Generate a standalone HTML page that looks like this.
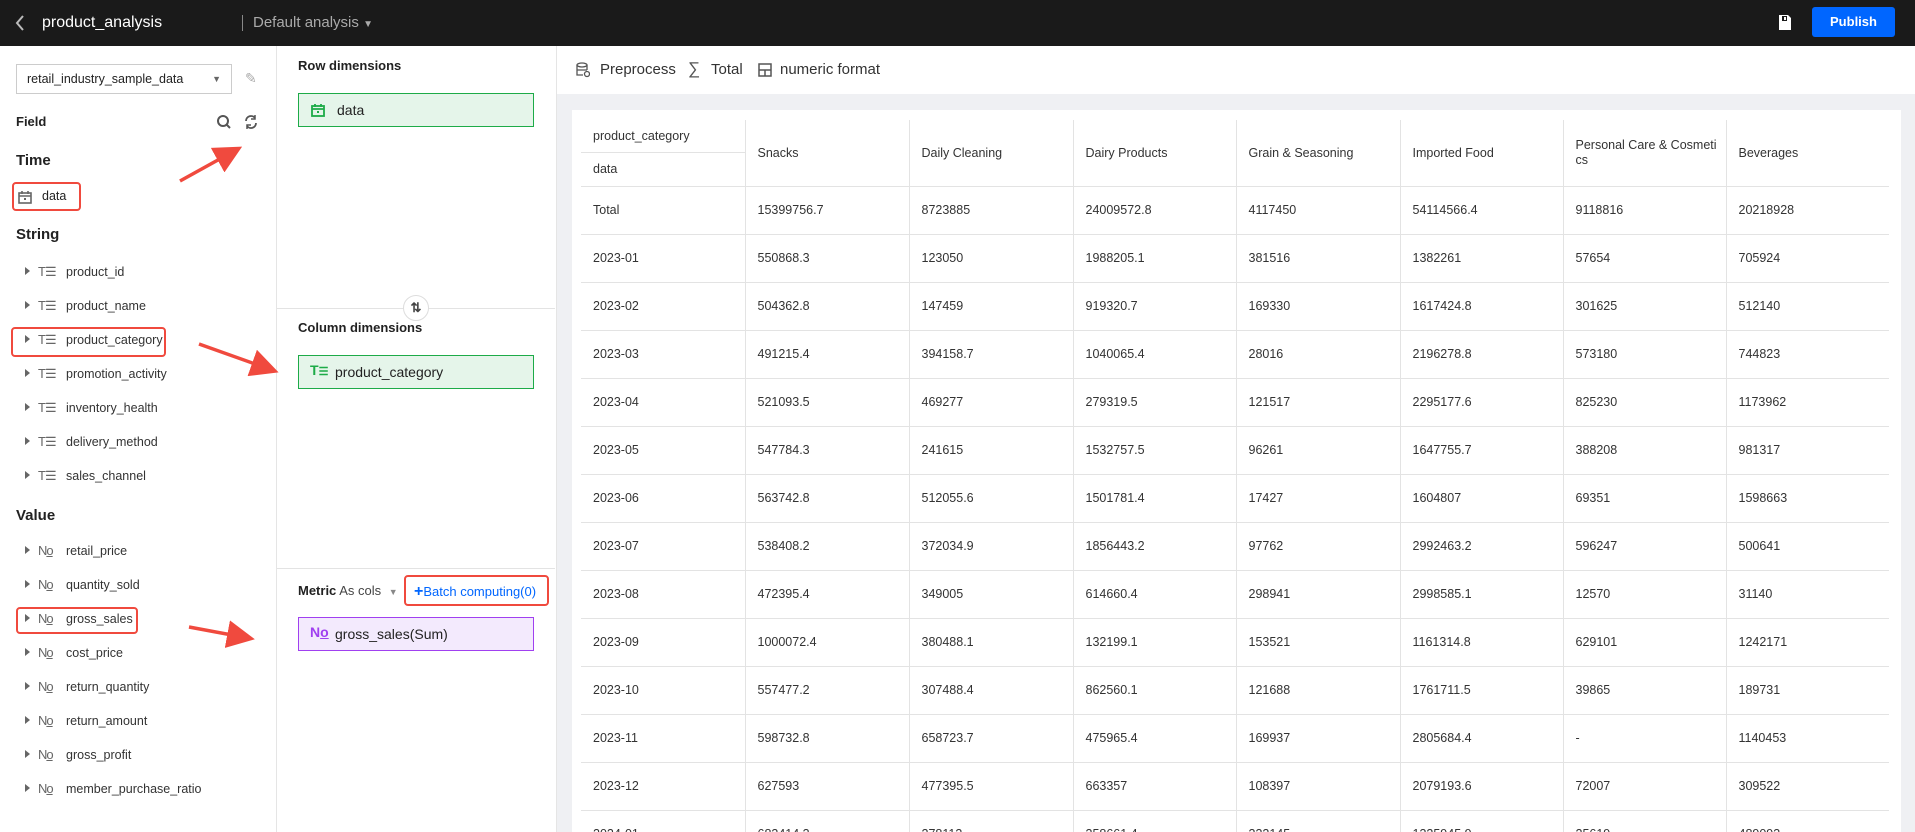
<!DOCTYPE html>
<html style="width:1915px;height:832px;overflow:hidden"><head><meta charset="utf-8"><style>
*{box-sizing:border-box;margin:0;padding:0}
body{width:1915px;height:832px;overflow:hidden;font-family:"Liberation Sans",sans-serif;color:#222;background:#fff;position:relative}
.a{position:absolute;white-space:nowrap}
.hdr{position:absolute;left:0;top:0;width:1915px;height:46px;background:#1a1a1a}
.fld{position:absolute;left:25px;font-size:12.5px;color:#333;height:20px;line-height:20px}
.fld .tri{display:inline-block;width:0;height:0;border-left:5px solid #666;border-top:4px solid transparent;border-bottom:4px solid transparent;margin-right:8px;vertical-align:1px}
.fld .ic{display:inline-block;width:20px;color:#666;font-size:13px;letter-spacing:-1px;margin-right:8px}
.sec{position:absolute;left:16px;font-size:15px;font-weight:bold;color:#222}
.red{position:absolute;border:2.5px solid #f04a3e;border-radius:4px}
table{border-collapse:collapse;font-size:12.5px;color:#333;table-layout:fixed;width:1308px}
td{border:1px solid #e3e3e3;height:48px;padding:0 12px;vertical-align:middle;overflow:hidden}
tr td:first-child{border-left:none}
tr td:last-child{border-right:none}
tr:first-child td{border-top:none}
</style></head><body>
<div class="hdr"></div>
<svg class="a" style="left:14px;top:14px" width="12" height="18"><path d="M9 2L3 9l6 7" stroke="#bbb" stroke-width="2" fill="none"/></svg>
<div class="a" style="left:42px;top:14px;font-size:16px;color:#fff">product_analysis</div>
<div class="a" style="left:242px;top:15px;width:1px;height:16px;background:#888"></div>
<div class="a" style="left:253px;top:14px;font-size:15px;color:#aaa">Default analysis <span style="font-size:10px">▼</span></div>
<svg class="a" style="left:1777px;top:14px" width="16" height="17"><path d="M2 1h9l3 3v12H2z" fill="#fff"/><rect x="5" y="2" width="5" height="5" fill="#1a1a1a"/><rect x="7" y="3" width="2" height="3" fill="#fff"/></svg>
<div class="a" style="left:1812px;top:7px;width:83px;height:30px;background:#0066ff;border-radius:3px;color:#fff;font-size:13px;font-weight:bold;text-align:center;line-height:30px">Publish</div>

<div class="a" style="left:276px;top:46px;width:1px;height:786px;background:#e5e5e5"></div>
<div class="a" style="left:16px;top:64px;width:216px;height:30px;border:1px solid #ccc;font-size:12.5px;line-height:28px;padding-left:10px">retail_industry_sample_data<span style="position:absolute;right:10px;font-size:9px;color:#666">▼</span></div>
<div class="a" style="left:245px;top:70px;color:#aaa;font-size:14px">✎</div>
<div class="a" style="left:16px;top:114px;font-size:13px;font-weight:bold">Field</div>
<svg class="a" style="left:216px;top:114px" width="16" height="16"><circle cx="7" cy="7" r="5" stroke="#555" stroke-width="2" fill="none"/><path d="M11 11l3 3" stroke="#555" stroke-width="2"/></svg>
<svg class="a" style="left:243px;top:114px" width="16" height="16"><path d="M3 7a5 5 0 0 1 9-3M13 9a5 5 0 0 1-9 3" stroke="#555" stroke-width="1.8" fill="none"/><path d="M12 1v4h-4M4 15v-4h4" stroke="#555" stroke-width="1.5" fill="none"/></svg>
<div class="sec" style="top:152px">Time</div>
<svg class="a" style="left:18px;top:190px" width="14" height="14"><rect x="1" y="3" width="12" height="10" fill="none" stroke="#666" stroke-width="1.6"/><path d="M1 6h12M4 1v3M10 1v3" stroke="#666" stroke-width="1.6"/><rect x="6" y="8" width="2" height="2" fill="#666"/></svg>
<div class="a" style="left:42px;top:189px;font-size:12.5px">data</div>
<div class="red" style="left:12px;top:182px;width:69px;height:29px"></div>
<div class="sec" style="top:226px">String</div>
<div class="fld" style="top:262px"><span class="tri"></span><span class="ic">T☰</span>product_id</div>
<div class="fld" style="top:296px"><span class="tri"></span><span class="ic">T☰</span>product_name</div>
<div class="fld" style="top:330px"><span class="tri"></span><span class="ic">T☰</span>product_category</div>
<div class="fld" style="top:364px"><span class="tri"></span><span class="ic">T☰</span>promotion_activity</div>
<div class="fld" style="top:398px"><span class="tri"></span><span class="ic">T☰</span>inventory_health</div>
<div class="fld" style="top:432px"><span class="tri"></span><span class="ic">T☰</span>delivery_method</div>
<div class="fld" style="top:466px"><span class="tri"></span><span class="ic">T☰</span>sales_channel</div>
<div class="red" style="left:11px;top:327px;width:155px;height:30px"></div>
<div class="sec" style="top:507px">Value</div>
<div class="fld" style="top:541px"><span class="tri"></span><span class="ic">N<u>o</u></span>retail_price</div>
<div class="fld" style="top:575px"><span class="tri"></span><span class="ic">N<u>o</u></span>quantity_sold</div>
<div class="fld" style="top:609px"><span class="tri"></span><span class="ic">N<u>o</u></span>gross_sales</div>
<div class="fld" style="top:643px"><span class="tri"></span><span class="ic">N<u>o</u></span>cost_price</div>
<div class="fld" style="top:677px"><span class="tri"></span><span class="ic">N<u>o</u></span>return_quantity</div>
<div class="fld" style="top:711px"><span class="tri"></span><span class="ic">N<u>o</u></span>return_amount</div>
<div class="fld" style="top:745px"><span class="tri"></span><span class="ic">N<u>o</u></span>gross_profit</div>
<div class="fld" style="top:779px"><span class="tri"></span><span class="ic">N<u>o</u></span>member_purchase_ratio</div>
<div class="red" style="left:16px;top:607px;width:122px;height:27px"></div>

<svg class="a" style="left:0;top:0" width="556" height="832">
<defs><marker id="m" markerWidth="8" markerHeight="8" refX="6" refY="4" orient="auto"><path d="M0 0L8 4L0 8z" fill="#f04a3e"/></marker></defs>
<path d="M180 181L236 150" stroke="#f04a3e" stroke-width="3.5" marker-end="url(#m)"/>
<path d="M199 344L272 370" stroke="#f04a3e" stroke-width="3.5" marker-end="url(#m)"/>
<path d="M189 627L248 638" stroke="#f04a3e" stroke-width="3.5" marker-end="url(#m)"/>
</svg>

<div class="a" style="left:556px;top:46px;width:1px;height:786px;background:#e5e5e5"></div>
<div class="a" style="left:298px;top:58px;font-size:13px;font-weight:bold">Row dimensions</div>
<div class="a" style="left:298px;top:93px;width:236px;height:34px;border:1px solid #1dab48;background:#e5f5ea;font-size:14px;line-height:32px;padding-left:38px">data</div>
<svg class="a" style="left:311px;top:103px" width="14" height="14"><rect x="1" y="3" width="12" height="10" fill="none" stroke="#1dab48" stroke-width="1.8"/><path d="M1 6h12M4 1v3M10 1v3" stroke="#1dab48" stroke-width="1.8"/><rect x="6" y="8" width="2" height="2" fill="#1dab48"/></svg>
<div class="a" style="left:277px;top:308px;width:278px;height:1px;background:#e3e3e3"></div>
<div class="a" style="left:403px;top:295px;width:26px;height:26px;border:1px solid #ddd;border-radius:50%;background:#fff;text-align:center;line-height:24px;font-size:13px;font-weight:bold;color:#444">⇅</div>
<div class="a" style="left:298px;top:320px;font-size:13px;font-weight:bold">Column dimensions</div>
<div class="a" style="left:298px;top:355px;width:236px;height:34px;border:1px solid #1dab48;background:#e5f5ea;font-size:14px;line-height:32px;padding-left:36px">product_category</div>
<div class="a" style="left:310px;top:362px;font-size:14px;color:#1dab48;font-weight:bold">T<span style="font-size:11px">☰</span></div>
<div class="a" style="left:277px;top:568px;width:278px;height:1px;background:#e3e3e3"></div>
<div class="a" style="left:298px;top:583px;font-size:13px"><b>Metric</b> <span style="color:#444">As cols</span> <span style="font-size:9px;color:#888;margin-left:4px">▼</span></div>
<div class="a" style="left:414px;top:583px;font-size:13px;color:#0066ff"><b style="font-size:16px">+</b>Batch computing(0)</div>
<div class="red" style="left:404px;top:575px;width:145px;height:31px"></div>
<div class="a" style="left:298px;top:617px;width:236px;height:34px;border:1px solid #a040f0;background:#f3eafd;font-size:14px;line-height:32px;padding-left:36px">gross_sales(Sum)</div>
<div class="a" style="left:310px;top:624px;font-size:14px;color:#a040f0;font-weight:bold">N<u>o</u></div>

<svg class="a" style="left:576px;top:62px" width="14" height="16"><ellipse cx="6" cy="3" rx="5" ry="2" fill="none" stroke="#555" stroke-width="1.3"/><path d="M1 3v10h6M11 3v5M1 8h10" stroke="#555" stroke-width="1.3" fill="none"/><circle cx="11" cy="12" r="2.5" fill="none" stroke="#555" stroke-width="1.3"/></svg>
<div class="a" style="left:600px;top:61px;font-size:15px;color:#333">Preprocess</div>
<div class="a" style="left:688px;top:59px;font-size:17px;color:#555">∑</div>
<div class="a" style="left:711px;top:61px;font-size:15px;color:#333">Total</div>
<svg class="a" style="left:758px;top:63px" width="14" height="14"><rect x="1" y="1" width="12" height="12" fill="none" stroke="#555" stroke-width="1.5"/><path d="M1 7h12M7 7v6" stroke="#555" stroke-width="1.5"/></svg>
<div class="a" style="left:780px;top:61px;font-size:15px;color:#333">numeric format</div>
<div class="a" style="left:557px;top:94px;width:1358px;height:738px;background:#eff0f3"></div>
<div class="a" style="left:572px;top:110px;width:1329px;height:722px;background:#fff;overflow:hidden">
<div style="position:absolute;left:9px;top:10px">
<table>
<colgroup><col style="width:164px"><col style="width:164px"><col style="width:164px"><col style="width:163px"><col style="width:164px"><col style="width:163px"><col style="width:163px"><col style="width:163px"></colgroup>
<tr style="height:66px"><td style="padding:0;height:66px"><div style="height:33px;line-height:33px;padding-left:12px;border-bottom:1px solid #e3e3e3">product_category</div><div style="height:32px;line-height:32px;padding-left:12px">data</div></td><td>Snacks</td><td>Daily Cleaning</td><td>Dairy Products</td><td>Grain &amp; Seasoning</td><td>Imported Food</td><td style="line-height:15px">Personal Care &amp; Cosmeti<br>cs</td><td>Beverages</td></tr>
<tr><td>Total</td><td>15399756.7</td><td>8723885</td><td>24009572.8</td><td>4117450</td><td>54114566.4</td><td>9118816</td><td>20218928</td></tr>
<tr><td>2023-01</td><td>550868.3</td><td>123050</td><td>1988205.1</td><td>381516</td><td>1382261</td><td>57654</td><td>705924</td></tr>
<tr><td>2023-02</td><td>504362.8</td><td>147459</td><td>919320.7</td><td>169330</td><td>1617424.8</td><td>301625</td><td>512140</td></tr>
<tr><td>2023-03</td><td>491215.4</td><td>394158.7</td><td>1040065.4</td><td>28016</td><td>2196278.8</td><td>573180</td><td>744823</td></tr>
<tr><td>2023-04</td><td>521093.5</td><td>469277</td><td>279319.5</td><td>121517</td><td>2295177.6</td><td>825230</td><td>1173962</td></tr>
<tr><td>2023-05</td><td>547784.3</td><td>241615</td><td>1532757.5</td><td>96261</td><td>1647755.7</td><td>388208</td><td>981317</td></tr>
<tr><td>2023-06</td><td>563742.8</td><td>512055.6</td><td>1501781.4</td><td>17427</td><td>1604807</td><td>69351</td><td>1598663</td></tr>
<tr><td>2023-07</td><td>538408.2</td><td>372034.9</td><td>1856443.2</td><td>97762</td><td>2992463.2</td><td>596247</td><td>500641</td></tr>
<tr><td>2023-08</td><td>472395.4</td><td>349005</td><td>614660.4</td><td>298941</td><td>2998585.1</td><td>12570</td><td>31140</td></tr>
<tr><td>2023-09</td><td>1000072.4</td><td>380488.1</td><td>132199.1</td><td>153521</td><td>1161314.8</td><td>629101</td><td>1242171</td></tr>
<tr><td>2023-10</td><td>557477.2</td><td>307488.4</td><td>862560.1</td><td>121688</td><td>1761711.5</td><td>39865</td><td>189731</td></tr>
<tr><td>2023-11</td><td>598732.8</td><td>658723.7</td><td>475965.4</td><td>169937</td><td>2805684.4</td><td>-</td><td>1140453</td></tr>
<tr><td>2023-12</td><td>627593</td><td>477395.5</td><td>663357</td><td>108397</td><td>2079193.6</td><td>72007</td><td>309522</td></tr>
<tr><td>2024-01</td><td>683414.3</td><td>278113</td><td>358661.4</td><td>332145</td><td>1325945.9</td><td>25619</td><td>489093</td></tr>
</table>
</div>
</div>
</body></html>
